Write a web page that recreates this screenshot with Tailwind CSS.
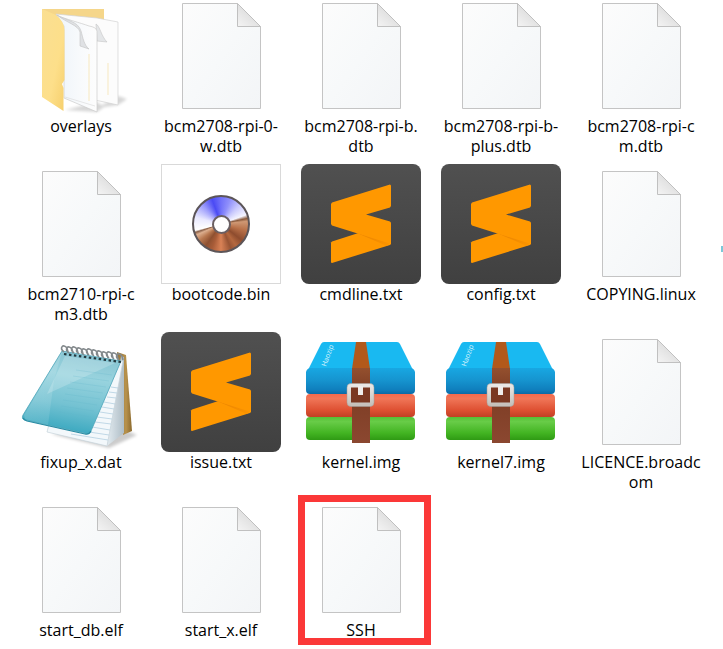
<!DOCTYPE html>
<html lang="en">
<head>
<meta charset="utf-8">
<meta name="viewport" content="width=device-width, initial-scale=1">
<title>boot</title>
<script src="https://cdn.jsdelivr.net/npm/@tailwindcss/browser@4"></script>
</head>
<body class="relative min-h-screen overflow-x-hidden bg-white font-['Open_Sans','Noto_Sans',sans-serif] text-base leading-5 text-black">

<!-- Shared icon artwork -->
<svg class="absolute size-0" aria-hidden="true">
  <defs>
    <linearGradient id="paper" x1="0" y1="0" x2="1" y2="1"><stop offset="0" stop-color="#fcfcfc"/><stop offset=".5" stop-color="#f7f9fa"/><stop offset="1" stop-color="#f3f5f7"/></linearGradient>
    <linearGradient id="fold" x1="0" y1="1" x2=".6" y2=".3"><stop offset="0" stop-color="#f4f4f4"/><stop offset="1" stop-color="#dcdcdc"/></linearGradient>
    <linearGradient id="yellow" x1="0" y1="0" x2="1" y2="1"><stop offset="0" stop-color="#fadf92"/><stop offset=".6" stop-color="#fddf8a"/><stop offset="1" stop-color="#f6cf6c"/></linearGradient>
    <linearGradient id="sheet" x1="0" y1="0" x2="1" y2="0"><stop offset="0" stop-color="#eef4fa"/><stop offset=".6" stop-color="#f8fafc"/><stop offset="1" stop-color="#fdfdfd"/></linearGradient>
    <linearGradient id="dark" x1="0" y1="0" x2="0" y2="1"><stop offset="0" stop-color="#505050"/><stop offset="1" stop-color="#404040"/></linearGradient>
    <linearGradient id="shade" x1="0" y1="0" x2="1" y2="0"><stop offset="0" stop-color="#e88200"/><stop offset="1" stop-color="#fb9400"/></linearGradient>
    <linearGradient id="cover" x1=".6" y1="0" x2=".4" y2="1"><stop offset="0" stop-color="#86c3d1"/><stop offset=".3" stop-color="#98d3de"/><stop offset=".65" stop-color="#74c2d2"/><stop offset="1" stop-color="#35a6be"/></linearGradient>
    <linearGradient id="glow" x1="0" y1="0" x2="1" y2="1"><stop offset="0" stop-color="#fff" stop-opacity=".2"/><stop offset="1" stop-color="#fff" stop-opacity=".08"/></linearGradient>
    <linearGradient id="wood" x1="0" y1="0" x2="1" y2="0"><stop offset="0" stop-color="#94743a"/><stop offset=".6" stop-color="#b8924c"/><stop offset="1" stop-color="#8a682c"/></linearGradient>
    <linearGradient id="edge" x1="0" y1="0" x2="1" y2="0"><stop offset="0" stop-color="#e3ebf0"/><stop offset="1" stop-color="#aebdc6"/></linearGradient>
    <linearGradient id="blue" x1="0" y1="0" x2="0" y2="1"><stop offset="0" stop-color="#18a7e2"/><stop offset=".45" stop-color="#1695d0"/><stop offset=".85" stop-color="#0f7ebc"/><stop offset="1" stop-color="#0c69a4"/></linearGradient>
    <linearGradient id="red" x1="0" y1="0" x2="0" y2="1"><stop offset="0" stop-color="#f4694c"/><stop offset=".2" stop-color="#f07658"/><stop offset=".7" stop-color="#de5032"/><stop offset="1" stop-color="#c04024"/></linearGradient>
    <linearGradient id="green" x1="0" y1="0" x2="0" y2="1"><stop offset="0" stop-color="#55c035"/><stop offset=".2" stop-color="#68cc48"/><stop offset=".7" stop-color="#42b422"/><stop offset="1" stop-color="#2f9a14"/></linearGradient>
    <linearGradient id="strap" x1="0" y1="0" x2="0" y2="1"><stop offset="0" stop-color="#94502e"/><stop offset=".3" stop-color="#7d3d24"/><stop offset="1" stop-color="#8b4730"/></linearGradient>
    <linearGradient id="metal" x1="0" y1="0" x2="0" y2="1"><stop offset="0" stop-color="#e9e7e4"/><stop offset="1" stop-color="#c6c1bc"/></linearGradient>
    <filter id="soft" x="-20%" y="-50%" width="140%" height="200%"><feGaussianBlur stdDeviation="1.5"/></filter>

    <symbol id="file" viewBox="0 0 120 120">
      <path d="M21.500 7.500H76.500L99.500 30.500V112.500H21.500Z" fill="url(#paper)" stroke="#c4c4c4"/>
      <path d="M76.500 7.500V30.500H99.500Z" fill="url(#fold)" stroke="#c0c0c0" stroke-linejoin="round"/>
    </symbol>

    <symbol id="folder" viewBox="0 0 120 120">
      <path d="M76 112L97 109 106 103 97 100ZM44 114L76 116 83 111 76 106Z" fill="#000" opacity=".16" filter="url(#soft)"/>
      <path d="M21 13H83V60H21Z" fill="#f5d68a"/>
      <path d="M35 18L76 22 97 26V109L74 104Z" fill="#fcfcfc" stroke="#d2d2d2" stroke-width=".7"/>
      <path d="M75 28C79 30 80 40 86 46L76 45Z" fill="#e4e6e8" stroke="#c6c6c6" stroke-width=".6"/>
      <path d="M87 67V99" stroke="#f7e8c0"/>
      <path d="M35 19C44 23 60 27 68 30Q75 31 76 35V116L43 102V30Z" fill="url(#sheet)" stroke="#cbcbcb" stroke-width=".7"/>
      <path d="M44 101L74 110" stroke="#d8d8d8" stroke-width=".6" fill="none"/>
      <path d="M36 19C46 25 57 25 60 35C62 42 63 49 68 53L59 50V36C57 29 46 27 36 19Z" fill="#dfe1e4" stroke="#c2c2c2" stroke-width=".6"/>
      <path d="M68 58V105" stroke="#f7e8c0"/>
      <path d="M21 13L35 19Q43 25 43.500 34V84L41 88 42.500 92V115L21 101Z" fill="url(#yellow)"/>
    </symbol>

    <symbol id="sublime" viewBox="0 0 120 120">
      <rect width="120" height="120" rx="8" fill="url(#dark)"/>
      <path d="M30 78.500L31 77.500 90 58.500V80L89 81 31 99 30 98.500Z" fill="#ff9800"/>
      <path d="M56 69L72 70 88 79 86 82Z" fill="url(#shade)"/>
      <path d="M31 38.500L89 20.500 90 21.500V42L89 43.500 65 50.500 89 57.500 90 59V79L87 79 31 61.500 30 60V40Z" fill="#ff9800"/>
    </symbol>

    <symbol id="notepad" viewBox="0 0 120 120">
      <path d="M30 102L88 116 116 103 104 98Z" fill="#000" opacity=".2" filter="url(#soft)"/>
      <path d="M96 20L105 23 111 99 102 103Z" fill="url(#wood)"/>
      <path d="M100 24L103 25V101L86 114Z" fill="url(#edge)"/>
      <path d="M46 22L102 29 86 114 26 100Z" fill="#f3f8fb" stroke="#c6d2da" stroke-width=".7"/>
      <path d="M90 55L97 56M88 60L96 61M86 65L95 66M83 70L94 72M81 75L93 77M79 80L92 82M76 85L91 87M74 90L90 92M71 95L89 98M68 100L88 103M50 102L87 108" stroke="#b2cfe1" stroke-width=".8"/>
      <path d="M41 19L100 29 70 99Q68 103 63 101L4 88Q0 87 2 83Z" fill="url(#cover)" stroke="#4da5b9" stroke-width=".8"/>
      <path d="M41 20L33 48 27 93 4 87 3 83Z" fill="url(#glow)"/>
      <path d="M44 24L94 31 26 62Z" fill="#fff" opacity=".2"/>
      <path d="M55 38L91 43M52 44L88 49M49 50L85 55M46 56L82 61M44 62L79 67M42 68L76 73M40 74L73 79M38 80L70 85" stroke="#61b5c9" stroke-width=".6" opacity=".4"/>
      <path d="M2 86Q3 88 6 89L64 102Q68 103 70 99" fill="none" stroke="#268aa2" stroke-width="1.200"/>
      <g fill="none" stroke="#83898c" stroke-width="1.600">
        <path d="M43 20c-5-4-1-9 3-4l1 4M48 21c-5-4-1-9 3-4l1 4M53 21c-5-4-1-9 3-4l1 4M58 22c-5-4-1-9 3-4l1 4M63 23c-5-4-1-9 3-4l1 4M68 23c-5-4-1-9 3-4l1 4M73 24c-5-4-1-9 3-4l1 4M78 25c-5-4-1-9 3-4l1 4M83 26c-5-4-1-9 3-4l1 4M88 26c-5-4-1-9 3-4l1 4M93 27c-5-4-1-9 3-4l1 4M98 28c-5-4-1-9 3-4l1 4"/>
      </g>
      <path d="M43 22L100 30" stroke="#24383e" stroke-width="2.200" stroke-dasharray="2.500 2.500"/>
    </symbol>

    <symbol id="archive" viewBox="0 0 120 120">
      <path d="M23 10H96Q98 10 99 12L114 42H5L20 12Q21 10 23 10Z" fill="#19b9f1"/>
      <rect x="5" y="85" width="109" height="23" rx="4" fill="url(#green)"/>
      <rect x="5" y="62" width="109" height="23" rx="4" fill="url(#red)"/>
      <path d="M5 40Q6 36 10 36H109Q113 36 114 40V58Q114 62 110 62H9Q5 62 5 58Z" fill="url(#blue)"/>
      <path d="M55 10H65L69 37H51Z" fill="#b2591b"/>
      <path d="M51 36H69V111H51Z" fill="url(#strap)"/>
      <rect x="48" y="53.500" width="23" height="19" rx="2" fill="#7a3822"/>
      <rect x="48" y="53.500" width="23" height="19" rx="2" fill="none" stroke="url(#metal)" stroke-width="4"/>
      <rect x="46" y="51.500" width="27" height="23" rx="4" fill="none" stroke="#a39d98" stroke-width=".5"/>
      <path d="M57 54H62V63H57Z" fill="#efedeb"/>
      <text transform="translate(25 35) rotate(-70)" font-size="7" fill="#d9f3fd" font-family="Open Sans, sans-serif">Haozip</text>
    </symbol>
  </defs>
</svg>

<main class="-mt-1 pl-[11px]">
  <ul class="grid grid-cols-[repeat(auto-fill,140px)] auto-rows-[168px] text-center">
    <li><a href="#" class="flex flex-col items-center"><svg class="size-[120px]" aria-hidden="true"><use href="#folder"/></svg><span>overlays</span></a></li>
    <li><a href="#" class="flex flex-col items-center"><svg class="size-[120px]" aria-hidden="true"><use href="#file"/></svg><span>bcm2708-rpi-0-<br>w.dtb</span></a></li>
    <li><a href="#" class="flex flex-col items-center"><svg class="size-[120px]" aria-hidden="true"><use href="#file"/></svg><span>bcm2708-rpi-b.<br>dtb</span></a></li>
    <li><a href="#" class="flex flex-col items-center"><svg class="size-[120px]" aria-hidden="true"><use href="#file"/></svg><span>bcm2708-rpi-b-<br>plus.dtb</span></a></li>
    <li><a href="#" class="flex flex-col items-center"><svg class="size-[120px]" aria-hidden="true"><use href="#file"/></svg><span>bcm2708-rpi-c<br>m.dtb</span></a></li>

    <li><a href="#" class="flex flex-col items-center"><svg class="size-[120px]" aria-hidden="true"><use href="#file"/></svg><span>bcm2710-rpi-c<br>m3.dtb</span></a></li>
    <li><a href="#" class="flex flex-col items-center">
      <span class="flex size-[120px] items-center justify-center border border-[#d9d9d9]">
        <span class="flex size-[58px] items-center justify-center rounded-full border-2 border-[#5c5558] bg-[conic-gradient(#7272fa_0deg,#8f8ffb_20deg,#c9c9fd_45deg,#f4f4ff_70deg,#8a5a3c_78deg,#cf9874_84deg,#b87048_105deg,#8e4c2e_128deg,#b4683f_145deg,#985434_158deg,#d98256_180deg,#a85c38_200deg,#8e5030_215deg,#b87850_232deg,#dcae8e_246deg,#8a6048_252deg,#ffffff_256deg,#e9e9ff_285deg,#9d9dfc_315deg,#4a4af4_340deg,#7272fa_360deg)]">
          <span class="size-[19px] rounded-full border-2 border-[#6a5f62] bg-white"></span>
        </span>
      </span><span>bootcode.bin</span></a></li>
    <li><a href="#" class="flex flex-col items-center"><svg class="size-[120px]" aria-hidden="true"><use href="#sublime"/></svg><span>cmdline.txt</span></a></li>
    <li><a href="#" class="flex flex-col items-center"><svg class="size-[120px]" aria-hidden="true"><use href="#sublime"/></svg><span>config.txt</span></a></li>
    <li><a href="#" class="flex flex-col items-center"><svg class="size-[120px]" aria-hidden="true"><use href="#file"/></svg><span>COPYING.linux</span></a></li>

    <li><a href="#" class="flex flex-col items-center"><svg class="size-[120px]" aria-hidden="true"><use href="#notepad"/></svg><span>fixup_x.dat</span></a></li>
    <li><a href="#" class="flex flex-col items-center"><svg class="size-[120px]" aria-hidden="true"><use href="#sublime"/></svg><span>issue.txt</span></a></li>
    <li><a href="#" class="flex flex-col items-center"><svg class="size-[120px]" aria-hidden="true"><use href="#archive"/></svg><span>kernel.img</span></a></li>
    <li><a href="#" class="flex flex-col items-center"><svg class="size-[120px]" aria-hidden="true"><use href="#archive"/></svg><span>kernel7.img</span></a></li>
    <li><a href="#" class="flex flex-col items-center"><svg class="size-[120px]" aria-hidden="true"><use href="#file"/></svg><span>LICENCE.broadc<br>om</span></a></li>

    <li><a href="#" class="flex flex-col items-center"><svg class="size-[120px]" aria-hidden="true"><use href="#file"/></svg><span>start_db.elf</span></a></li>
    <li><a href="#" class="flex flex-col items-center"><svg class="size-[120px]" aria-hidden="true"><use href="#file"/></svg><span>start_x.elf</span></a></li>
    <li class="relative"><a href="#" class="flex flex-col items-center"><svg class="size-[120px]" aria-hidden="true"><use href="#file"/></svg><span>SSH</span></a>
      <div class="pointer-events-none absolute -top-[5px] right-0 left-[7px] h-[150px] border-[7px] border-[#fb3838]"></div></li>
  </ul>
</main>
<div class="absolute top-[246px] right-0 h-1.5 w-0.5 bg-[#7cc8d8]"></div>
</body>
</html>
